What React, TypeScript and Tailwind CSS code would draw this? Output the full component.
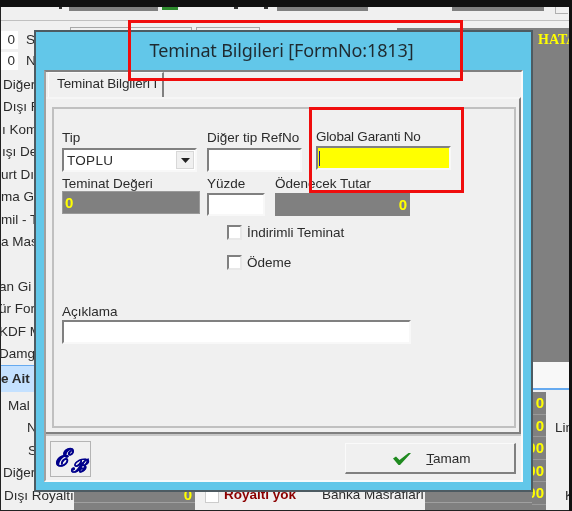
const leftTop = [
  { text: "Diğer", pl: "pl-[2px]" },
  { text: "Dışı R", pl: "pl-[2px]" },
  { text: "ı Kom", pl: "pl-[1px]" },
  { text: "ışı De", pl: "pl-[1px]" },
  { text: "urt Dış", pl: "pl-0" },
  { text: "ma Gi", pl: "pl-0" },
  { text: "mil - T", pl: "pl-0" },
  { text: "a Mas", pl: "pl-0" },
];
const leftMid = ["an Gi", "ür For", "KDF M", "Damga"];
const leftBottom = [
  { text: "Mal", pl: "pl-[7px]" },
  { text: "N", pl: "pl-[26px]" },
  { text: "S", pl: "pl-[27px]" },
  { text: "Diğer", pl: "pl-[2px]" },
  { text: "Dışı Royaltı", pl: "pl-[3px]" },
];
const rightValues = ["0", "0", "00", "00", ",00"];

function Inset({ className = "", children }: { className?: string; children?: React.ReactNode }) {
  return (
    <div
      className={`border-2 border-t-[#808080] border-l-[#808080] border-r-[#f8f8f8] border-b-[#f8f8f8] ${className}`}
    >
      {children}
    </div>
  );
}

function Checkbox({ label }: { label: string }) {
  return (
    <div className="flex items-center gap-[5px]">
      <div className="h-[15px] w-[15px] border-2 border-t-[#808080] border-l-[#808080] border-r-[#e8e8e8] border-b-[#e8e8e8] bg-white" />
      <span>{label}</span>
    </div>
  );
}

export default function App() {
  return (
    <div className="relative flex h-[511px] w-[572px] flex-col overflow-hidden border-r-[3px] border-[#111111] bg-[#f0f0f0] font-['Liberation_Sans',sans-serif] text-[13.5px] leading-none text-[#2b2b2b] blur-[0.35px]">
      <div className="h-[7px] shrink-0 bg-[#111111]" />

      {/* strip under the black bar, mostly hidden by the dialog */}
      <div className="flex h-[23px] shrink-0 flex-col border-l border-[#222222]">
        <div className="flex h-[13px]">
          <div className="ml-[58px] h-[2px] w-[3px] bg-[#333333]" />
          <div className="ml-[7px] h-[4px] w-[89px] bg-[#808080]" />
          <div className="ml-[4px] h-[3px] w-[16px] bg-[#2e8b2e]" />
          <div className="ml-[56px] h-[2px] w-[4px] bg-[#333333]" />
          <div className="ml-[26px] h-[2px] w-[4px] bg-[#333333]" />
          <div className="ml-[9px] h-[4px] w-[91px] bg-[#808080]" />
          <div className="ml-[84px] h-[4px] w-[92px] bg-[#808080]" />
          <div className="ml-[11px] h-[7px] w-[13px] border-b border-l border-[#b0b0b0]" />
        </div>
        <div className="h-px bg-[#c0c0c0]" />
        <div className="flex flex-1 items-end">
          <div className="ml-[69px] h-[3px] w-[122px] border-l border-r border-t border-[#a8a8a8]" />
          <div className="ml-[4px] h-[3px] w-[64px] border-l border-r border-t border-[#a8a8a8]" />
          <div className="ml-auto h-[2px] w-[172px] bg-[#808080]" />
        </div>
      </div>

      <div className="flex min-h-0 flex-1">
        {/* left label column */}
        <div className="flex w-[74px] shrink-0 flex-col whitespace-nowrap border-l border-[#222222]">
          <div className="flex h-[19px] items-center">
            <div className="flex h-[18px] w-[17px] items-center justify-end bg-white pr-[3px]">0</div>
            <span className="ml-[8px]">S</span>
          </div>
          <div className="mt-[2px] flex h-[19px] items-center">
            <div className="flex h-[18px] w-[17px] items-center justify-end bg-white pr-[3px]">0</div>
            <span className="ml-[8px]">N</span>
          </div>
          <div className="mt-[3px]">
            {leftTop.map((row) => (
              <div key={row.text} className={`flex h-[22.5px] items-center ${row.pl}`}>
                {row.text}
              </div>
            ))}
          </div>
          <div className="mt-[22px]">
            {leftMid.map((text) => (
              <div key={text} className="-ml-[2px] flex h-[22.5px] items-center">
                {text}
              </div>
            ))}
          </div>
          <div className="flex h-[27px] items-center border-t border-[#66aaf0] bg-[#c4e1ff] font-bold">e Ait</div>
          <div className="mt-[2px]">
            {leftBottom.map((row) => (
              <div key={row.text} className={`flex h-[22.5px] items-center ${row.pl}`}>
                {row.text}
              </div>
            ))}
          </div>
        </div>

        {/* middle, only the bottom row shows under the dialog */}
        <div className="flex flex-1 flex-col justify-end">
          <div className="flex h-[23px] items-start">
            <div className="flex h-full w-[121px] flex-col bg-[#808080] text-[15px] font-bold text-[#ffff00]">
              <div className="flex h-[16px] items-center justify-end border-b border-[#a0a0a0] pr-[3px]">0</div>
            </div>
            <div className="ml-[10px] mt-[3px] h-[13px] w-[14px] border border-[#cccccc] bg-white" />
            <span className="ml-[5px] mt-[1px] font-bold text-[#8b0000]">Royaltı yok</span>
            <span className="ml-[26px] mt-[1px]">Banka Masrafları</span>
            <div className="ml-auto flex h-full w-[107px] flex-col bg-[#808080]">
              <div className="h-[16px] border-b border-[#a0a0a0]" />
            </div>
          </div>
        </div>

        {/* right column */}
        <div className="flex w-[37px] shrink-0 flex-col">
          <div className="h-[332px] overflow-hidden whitespace-nowrap bg-[#808080] pl-[6px] pt-[3px] font-['Liberation_Serif',serif] text-[14px] font-bold text-[#ffff00]">
            HATA
          </div>
          <div className="h-[26px] bg-[#f8f8f8]" />
          <div className="h-[2px] bg-[#66aaf0]" />
          <div className="mt-[2px] flex flex-1 overflow-hidden">
            <div className="flex w-[14px] flex-col items-end bg-[#808080] text-[15px] font-bold text-[#ffff00]">
              {rightValues.map((value, i) => (
                <div key={i} className="flex h-[22.5px] w-full items-center justify-end border-b border-[#999999] pr-[2px]">
                  {value}
                </div>
              ))}
            </div>
            <div className="flex flex-1 flex-col overflow-hidden pl-[9px] pt-[29px]">
              <span>Lin</span>
              <span className="ml-[10px] mt-[54px]">K</span>
            </div>
          </div>
        </div>
      </div>
      <div className="h-px shrink-0 bg-[#222222]" />

      {/* dialog window */}
      <div className="absolute left-[34px] top-[30px] flex h-[462px] w-[499px] flex-col border-2 border-[#4d5b62] bg-[#62c7e9] px-[8px] pb-[8px]">
        <div className="flex h-[38px] shrink-0 items-center justify-center pb-[3px] pr-[4px] font-['Noto_Sans',sans-serif] text-[18px] tracking-[-0.13px] text-[#1f2a30]">
          Teminat Bilgileri [FormNo:1813]
        </div>
        <div className="flex min-h-0 flex-1 flex-col border-2 border-l-[#a0a0a0] border-t-[#808080] border-r-[#fafafa] border-b-[#fafafa] bg-[#f0f0f0]">
          {/* tab strip */}
          <div className="flex h-[25px] shrink-0 items-stretch pl-[2px]">
            <div className="flex w-[116px] items-center border-l border-r-2 border-t border-l-[#fafafa] border-r-[#808080] border-t-[#fafafa] pb-[2px] pl-[8px] tracking-[-0.1px]">
              Teminat Bilgileri I
            </div>
          </div>
          {/* tab page */}
          <div className="flex h-[337px] shrink-0 flex-col border-b-2 border-r-2 border-t-2 border-b-[#808080] border-r-[#808080] border-t-[#f6f6f6] pb-[4px] pl-[6px] pr-[3px] pt-[8px]">
            <div className="flex flex-1 flex-col border-2 border-[#c0c0c0] pl-[8px]">
              <div className="mt-[20px] flex items-end">
                <div className="w-[135px]">
                  <div className="h-[19px] pt-[2px]">Tip</div>
                  <Inset className="flex h-[24px] items-center bg-white pl-[3px] pt-[2px]">
                    <span className="flex-1 tracking-[0.3px]">TOPLU</span>
                    <div className="mb-[2px] mr-[1px] flex h-[18px] w-[18px] items-center justify-center border border-[#d8d8d8] bg-[#f0f0f0]">
                      <svg width="9" height="5" viewBox="0 0 9 5" aria-hidden>
                        <polygon points="0,0 9,0 4.5,5" fill="#222222" />
                      </svg>
                    </div>
                  </Inset>
                </div>
                <div className="ml-[10px] w-[95px]">
                  <div className="h-[19px] pt-[2px]">Diğer tip RefNo</div>
                  <Inset className="h-[24px] bg-white" />
                </div>
                <div className="mb-[2px] ml-[14px] w-[135px]">
                  <div className="h-[17px] pt-px tracking-[-0.2px]">Global Garanti No</div>
                  <Inset className="flex h-[24px] items-center bg-[#ffff00] pl-[1px]">
                    <div className="h-[15px] w-px bg-[#1a1a8c]" />
                  </Inset>
                </div>
              </div>

              <div className="mt-[3px] flex items-start">
                <div className="w-[138px]">
                  <div className="h-[16px] pt-[2px]">Teminat Değeri</div>
                  <div className="flex h-[23px] items-center border border-[#9a9a9a] bg-[#808080] pl-[2px] text-[15px] font-bold text-[#ffff00]">
                    0
                  </div>
                </div>
                <div className="ml-[7px] w-[58px]">
                  <div className="h-[18px] pt-[2px]">Yüzde</div>
                  <Inset className="h-[23px] bg-white" />
                </div>
                <div className="ml-[10px] w-[135px]">
                  <div className="h-[18px] pt-[2px]">Ödenecek Tutar</div>
                  <div className="flex h-[23px] items-center justify-end bg-[#808080] pr-[3px] text-[15px] font-bold text-[#ffff00]">
                    0
                  </div>
                </div>
              </div>

              <div className="ml-[165px] mt-[9px]">
                <Checkbox label="İndirimli Teminat" />
              </div>
              <div className="ml-[165px] mt-[15px]">
                <Checkbox label="Ödeme" />
              </div>

              <div className="mt-[35px]">Açıklama</div>
              <Inset className="mt-[1px] h-[24px] w-[349px] bg-white" />
            </div>
          </div>

          {/* footer */}
          <div className="flex flex-1 items-center justify-between border-t-2 border-[#c8c8c8] pl-[4px] pr-[5px] pt-[1px]">
            <div className="relative h-[36px] w-[41px] border border-[#b4b4b4] font-['DejaVu_Serif',serif] font-bold italic text-[#00008b] [-webkit-text-stroke:0.5px_#00008b]">
              <span className="absolute left-[4px] top-[4px] text-[24px]">ℰ</span>
              <span className="absolute left-[20px] top-[15px] text-[18px]">ℬ</span>
            </div>
            <div className="flex h-[31px] w-[171px] items-center justify-center gap-[15px] border-b-2 border-l border-r-2 border-t border-[#808080] border-l-[#fafafa] border-t-[#fafafa] pl-[4px]">
              <svg width="18" height="13" viewBox="0 0 18 13" aria-hidden>
                <polygon points="0,6.5 3,4.5 6.5,8 15.5,1 18,1 7,13 5.5,13" fill="#1f8a1f" />
              </svg>
              <span className="pt-[2px]">
                <span className="underline">T</span>amam
              </span>
            </div>
          </div>
        </div>
      </div>

      {/* red annotation frames */}
      <div className="absolute left-[128px] top-[20px] h-[61px] w-[335px] border-[3px] border-[#f00d0d]" />
      <div className="absolute left-[309px] top-[107px] h-[86px] w-[155px] border-[3px] border-[#f00d0d]" />
    </div>
  );
}
